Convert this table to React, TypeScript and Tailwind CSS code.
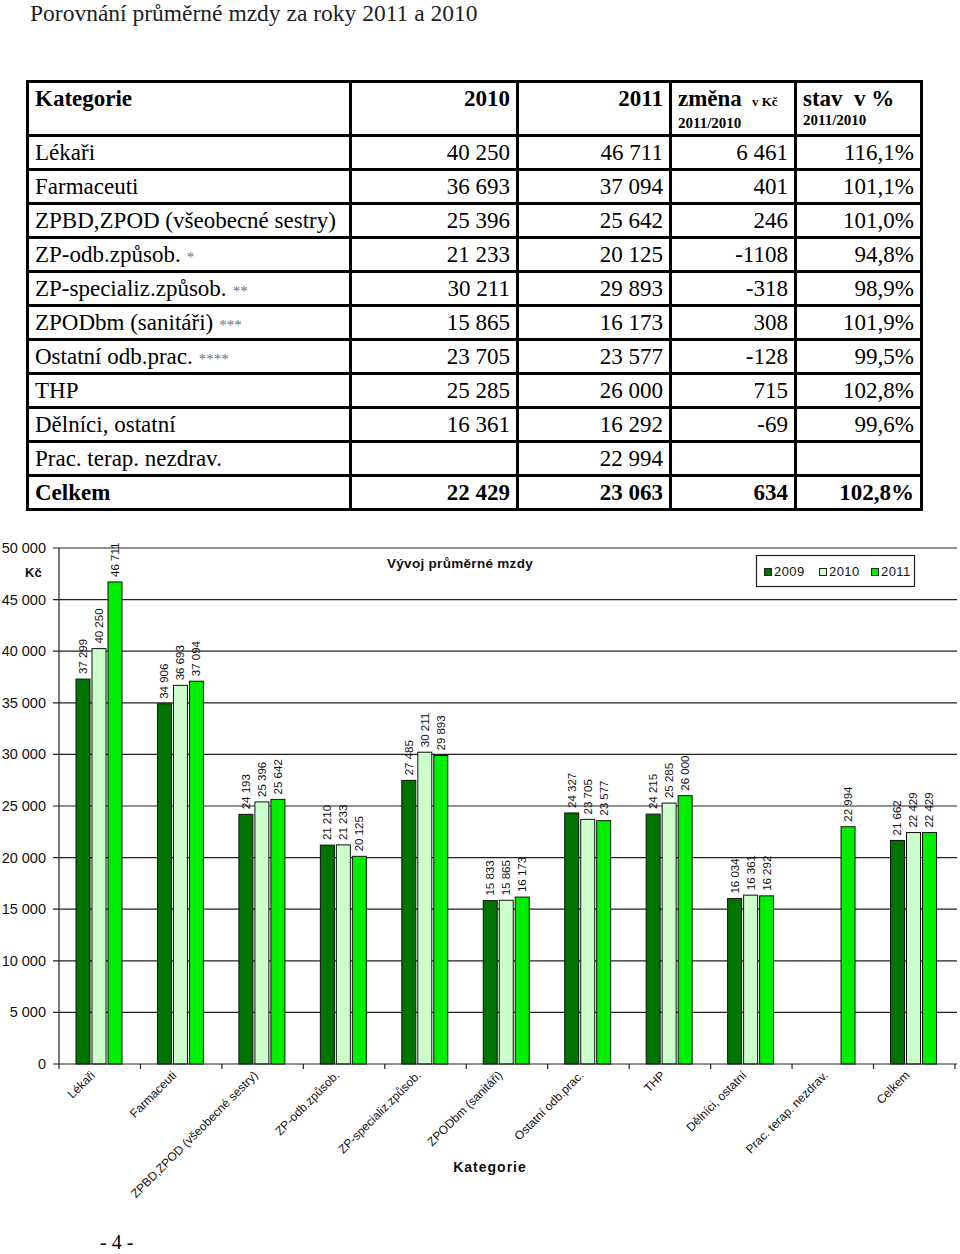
import React from 'react';

type Row = {
  name: string;
  stars?: string;
  v2010: string;
  v2011: string;
  diff: string;
  pct: string;
  bold?: boolean;
};

const rows: Row[] = [
  { name: 'Lékaři', v2010: '40 250', v2011: '46 711', diff: '6 461', pct: '116,1%' },
  { name: 'Farmaceuti', v2010: '36 693', v2011: '37 094', diff: '401', pct: '101,1%' },
  { name: 'ZPBD,ZPOD (všeobecné sestry)', v2010: '25 396', v2011: '25 642', diff: '246', pct: '101,0%' },
  { name: 'ZP-odb.způsob.', stars: '*', v2010: '21 233', v2011: '20 125', diff: '-1108', pct: '94,8%' },
  { name: 'ZP-specializ.způsob.', stars: '**', v2010: '30 211', v2011: '29 893', diff: '-318', pct: '98,9%' },
  { name: 'ZPODbm (sanitáři)', stars: '***', v2010: '15 865', v2011: '16 173', diff: '308', pct: '101,9%' },
  { name: 'Ostatní odb.prac.', stars: '****', v2010: '23 705', v2011: '23 577', diff: '-128', pct: '99,5%' },
  { name: 'THP', v2010: '25 285', v2011: '26 000', diff: '715', pct: '102,8%' },
  { name: 'Dělníci, ostatní', v2010: '16 361', v2011: '16 292', diff: '-69', pct: '99,6%' },
  { name: 'Prac. terap. nezdrav.', v2010: '', v2011: '22 994', diff: '', pct: '' },
  { name: 'Celkem', v2010: '22 429', v2011: '23 063', diff: '634', pct: '102,8%', bold: true },
];

// chart data: [2009, 2010, 2011]
const chartData: { label: string; values: (number | null)[] }[] = [
  { label: 'Lékaři', values: [37299, 40250, 46711] },
  { label: 'Farmaceuti', values: [34906, 36693, 37094] },
  { label: 'ZPBD,ZPOD (všeobecné sestry)', values: [24193, 25396, 25642] },
  { label: 'ZP-odb.způsob.', values: [21210, 21233, 20125] },
  { label: 'ZP-specializ.způsob.', values: [27485, 30211, 29893] },
  { label: 'ZPODbm (sanitáři)', values: [15833, 15865, 16173] },
  { label: 'Ostatní odb.prac.', values: [24327, 23705, 23577] },
  { label: 'THP', values: [24215, 25285, 26000] },
  { label: 'Dělníci, ostatní', values: [16034, 16361, 16292] },
  { label: 'Prac. terap. nezdrav.', values: [null, null, 22994] },
  { label: 'Celkem', values: [21662, 22429, 22429] },
];

const barColors = ['#007400', '#ccffcc', '#00ee00'];
const fmt = (n: number) => n.toLocaleString('en-US').replace(/,/g, ' ');

const AXIS_X = 59;
const ZERO_Y = 543;
const CAT_W = 81.45;
const yOf = (v: number) => ZERO_Y - (v * 516) / 50000;
const sans = '"Liberation Sans", Arial, sans-serif';

function Chart() {
  const grid = [5000, 10000, 15000, 20000, 25000, 30000, 35000, 40000, 45000, 50000];
  return (
    <svg width={960} height={700} viewBox="0 0 960 700" className="block" fontFamily={sans}>
      {grid.map((g) => (
        <line key={g} x1={53} x2={957} y1={yOf(g)} y2={yOf(g)} stroke="#222" strokeWidth={1.2} />
      ))}
      {[0, ...grid].map((g) => (
        <text key={'l' + g} x={46} y={yOf(g) + 5} textAnchor="end" fontSize={14.5} fill="#111">
          {g === 0 ? '0' : fmt(g)}
        </text>
      ))}
      <text x={25} y={56} fontSize={13} fontWeight="bold" fill="#111">Kč</text>

      {/* title + legend */}
      <text x={387} y={47} fontSize={13.5} fontWeight="bold" fill="#111" letterSpacing={0.3}>Vývoj průměrné mzdy</text>
      <rect x={756.5} y={34.5} width={158} height={31} fill="#fff" stroke="#222" strokeWidth={1.2} />
      {['2009', '2010', '2011'].map((y, i) => {
        const sx = [764, 819, 871][i];
        return (
          <g key={y}>
            <rect x={sx + 0.5} y={47.5} width={7} height={7} fill={barColors[i]} stroke="#222" strokeWidth={1} />
            <text x={sx + 10} y={55} fontSize={13} fill="#111" letterSpacing={0.4}>{y}</text>
          </g>
        );
      })}

      {/* bars */}
      {chartData.map((c, ci) => {
        const start = AXIS_X + CAT_W * ci;
        const lx = start + CAT_W / 2 - 4;
        const ly = 555;
        return (
          <g key={c.label}>
            {c.values.map((v, bi) => {
              if (v === null) return null;
              const x = start + 17 + 16 * bi;
              const top = yOf(v);
              const cx = x + 7;
              return (
                <g key={bi}>
                  <rect x={x} y={top} width={14} height={ZERO_Y - top} fill={barColors[bi]} stroke="#111" strokeWidth={1} />
                  <text
                    x={cx + 4}
                    y={top - 5}
                    fontSize={11.5}
                    fill="#111"
                    transform={`rotate(-90 ${cx + 4} ${top - 5})`}
                  >
                    {fmt(v)}
                  </text>
                </g>
              );
            })}
            <text
              x={lx}
              y={ly}
              fontSize={12}
              fill="#111"
              textAnchor="end"
              transform={`rotate(-45 ${lx} ${ly})`}
            >
              {c.label}
            </text>
          </g>
        );
      })}

      {/* axes */}
      <line x1={AXIS_X} x2={AXIS_X} y1={yOf(50000)} y2={ZERO_Y} stroke="#222" strokeWidth={1.2} />
      <line x1={53} x2={957} y1={ZERO_Y} y2={ZERO_Y} stroke="#222" strokeWidth={1.2} />
      {Array.from({ length: 12 }).map((_, i) => (
        <line key={i} x1={AXIS_X + CAT_W * i} x2={AXIS_X + CAT_W * i} y1={ZERO_Y} y2={ZERO_Y + 5} stroke="#222" strokeWidth={1.2} />
      ))}
      <text x={490} y={651} textAnchor="middle" fontSize={14} fontWeight="bold" fill="#111" letterSpacing={1}>Kategorie</text>
    </svg>
  );
}

export default function App() {
  const cell = 'border-[3px] border-black h-[34px] align-middle leading-none';
  return (
    <div className="w-[960px] h-[1254px] overflow-hidden bg-white text-black" style={{ fontFamily: '"Liberation Serif", "Times New Roman", serif' }}>
      <h1 className="pl-[30px] text-[23.5px] leading-[26px] text-[#222] font-normal">
        Porovnání průměrné mzdy za roky 2011 a 2010
      </h1>

      <table className="ml-[26px] mt-[54px] w-[894px] table-fixed border-collapse border-[3px] border-black text-[23px]">
        <colgroup>
          <col className="w-[323px]" />
          <col className="w-[167px]" />
          <col className="w-[153px]" />
          <col className="w-[125px]" />
          <col className="w-[126px]" />
        </colgroup>
        <thead>
          <tr className="h-[54px]">
            <th className="border-[3px] border-black align-top text-left font-bold pl-[6px] pt-[3px] leading-[26px]">Kategorie</th>
            <th className="border-[3px] border-black align-top text-right font-bold pr-[6px] pt-[3px] leading-[26px]">2010</th>
            <th className="border-[3px] border-black align-top text-right font-bold pr-[6px] pt-[3px] leading-[26px]">2011</th>
            <th className="border-[3px] border-black align-top text-left font-bold pl-[6px] pt-[3px]">
              <div className="leading-[26px] whitespace-nowrap">
                změna<span className="ml-[10px] text-[13px]">v Kč</span>
              </div>
              <div className="text-[15px] leading-[16px]">2011/2010</div>
            </th>
            <th className="border-[3px] border-black align-top text-left font-bold pl-[6px] pt-[3px]">
              <div className="leading-[26px] whitespace-pre">stav  v %</div>
              <div className="text-[15px] leading-[16px]">2011/2010</div>
            </th>
          </tr>
        </thead>
        <tbody>
          {rows.map((r) => (
            <tr key={r.name} className={r.bold ? 'font-bold' : ''}>
              <td className={`${cell} pl-[6px] whitespace-nowrap`}>
                {r.name}
                {r.stars && <span className="ml-[6px] text-[15px] text-gray-500 font-normal">{r.stars}</span>}
              </td>
              <td className={`${cell} text-right pr-[6px]`}>{r.v2010}</td>
              <td className={`${cell} text-right pr-[6px]`}>{r.v2011}</td>
              <td className={`${cell} text-right pr-[6px]`}>{r.diff}</td>
              <td className={`${cell} text-right pr-[6px]`}>{r.pct}</td>
            </tr>
          ))}
        </tbody>
      </table>

      <div className="mt-[10px]">
        <Chart />
      </div>

      <div className="pl-[100px] pt-[9px] text-[20px] leading-[24px]">- 4 -</div>
    </div>
  );
}
